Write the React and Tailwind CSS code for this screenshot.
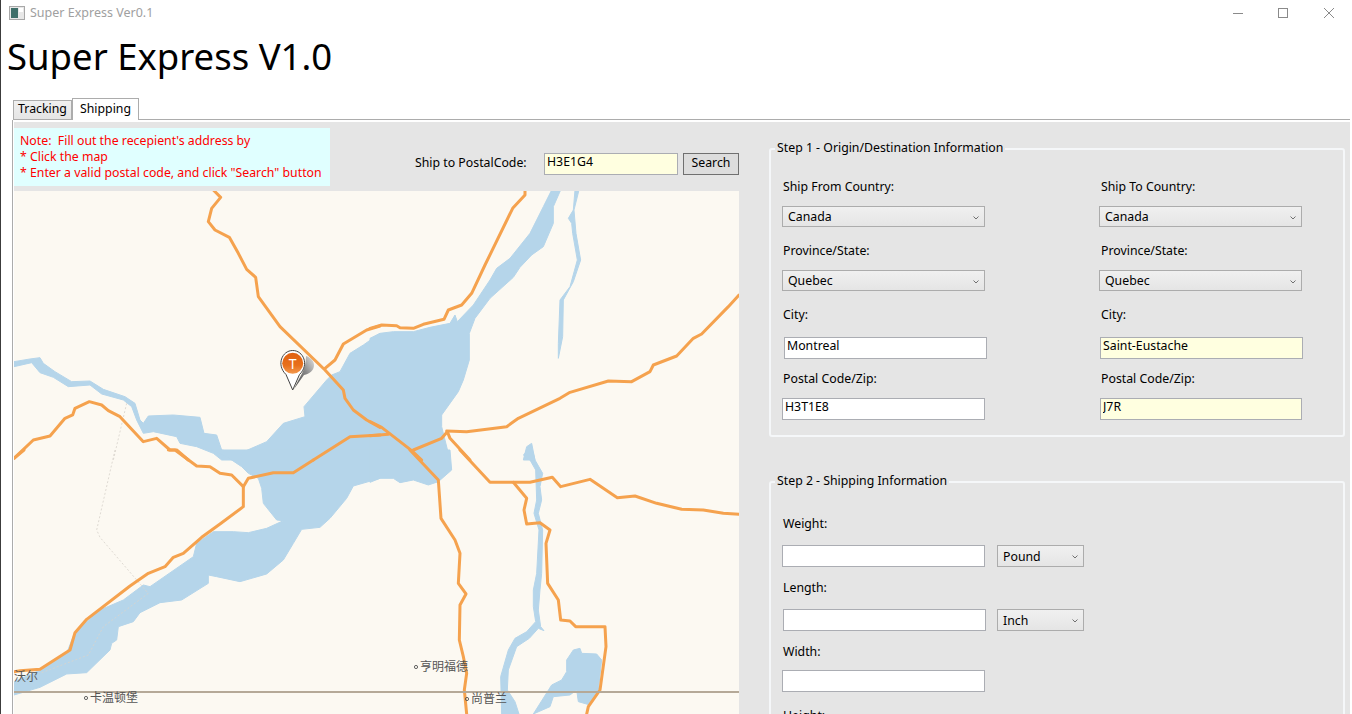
import React from 'react';

const FONT = "font-['Noto_Sans','Noto_Sans_CJK_SC',sans-serif]";

// map traced from the reference in 3x tiles, one group per tile
const TILES = {
  a: 'translate(0 190) scale(0.33333)',
  b: 'translate(370 190) scale(0.33333)',
  c: 'translate(0 450) scale(0.33333)',
  d: 'translate(370 450) scale(0.33333)',
};

const WATER = [
  ['a', '42,515 90,507 120,503 130,520 165,545 215,575 270,573 310,598 375,620 405,640 420,690 430,700 445,678 520,675 600,682 612,730 650,735 665,780 720,790 800,755 850,700 915,680 912,650 980,570 995,555 1020,545 1050,490 1090,465 1140,430 1140,810 665,810 640,790 590,770 540,760 530,740 460,725 430,730 410,690 395,650 370,630 305,612 270,585 205,590 160,562 120,548 95,518 42,530'],
  ['b', '0,445 30,430 70,425 130,425 180,412 240,400 255,375 262,395 310,345 360,270 380,235 420,205 480,130 520,50 545,0 572,0 550,50 550,100 520,170 485,195 450,232 430,262 360,325 315,385 298,430 298,510 280,570 265,605 215,675 215,710 240,810 0,810'],
  ['b', '615,0 627,0 612,60 618,130 632,210 610,275 580,330 578,440 565,505 565,460 570,330 600,290 622,210 608,130 605,100 595,85 610,60'],
  ['c', '635,0 735,0 780,0 1140,0 1140,85 1060,108 1040,145 990,205 960,232 905,238 880,280 850,330 800,372 720,395 650,380 625,375 625,400 545,450 480,458 420,488 400,515 355,530 350,570 335,580 330,600 260,668 200,672 120,712 42,735 42,695 110,665 200,610 225,545 300,480 370,450 430,405 450,410 580,320 590,280 640,245 700,245 745,248 800,235 850,212 830,210 790,160 785,115 775,85 745,70 725,50 680,20'],
  ['d', '0,0 240,0 245,60 205,95 175,105 130,90 90,98 70,85 30,85 0,97'],
  ['d', '460,15 475,0 490,10 495,30 518,70 510,110 515,150 505,190 518,240 515,370 510,420 505,480 512,530 522,542 505,535 478,565 440,590 415,660 412,720 435,755 447,792 395,792 392,680 415,600 435,565 470,545 497,515 490,470 490,420 500,370 507,240 492,190 500,150 497,60 480,30'],
  ['d', '610,600 630,595 635,610 680,612 695,630 685,720 660,765 625,755 620,720 600,735 550,740 540,770 490,792 545,705 575,690 590,665 590,630'],
  ['b', '460,810 470,770 485,760 495,810'],
];

const ROADS = [
  ['a', '640,0 662,22 635,55 625,95 645,120 688,142 715,190 740,238 767,262 775,320 840,410 975,540 1030,600 1035,625 1060,660 1100,690 1140,712'],
  ['a', '1140,408 1100,420 1030,462 1005,510 975,535'],
  ['a', '42,805 100,750 150,738 195,685 218,675 225,655 268,635 305,645 325,662 360,680 430,755 470,745 510,780 530,780 565,810'],
  ['a', '940,810 1050,740 1140,735'],
  ['b', '465,0 465,15 428,55 345,225 305,310 275,345 235,360 222,388 160,403 130,415 90,413 80,407 35,405 0,415'],
  ['b', '1107,315 1075,350 995,432 970,445 920,498 850,525 840,545 785,575 715,573 600,607 570,625 445,685 410,710 290,725 230,723'],
  ['b', '0,737 55,733'],
  ['b', '0,695 35,712 125,782 155,810'],
  ['b', '130,780 215,745 232,725 240,745 300,810'],
  ['c', '42,25 72,0'],
  ['c', '505,0 525,0 590,48 630,50 660,70 695,75 730,110 730,170 660,222 605,262 550,310 520,322 495,350 445,370 390,408 260,508 225,548 210,600 120,658 60,662 42,665'],
  ['c', '730,110 745,85 820,68 880,68 940,30'],
  ['d', '120,0 205,90 213,205 255,270 270,310 265,400 288,432 270,465 268,570 280,620 290,670 283,720 290,792'],
  ['d', '270,0 360,97 480,97 547,82 572,110 660,88 742,143 795,138 860,160 935,178 1000,180 1060,190 1107,193'],
  ['d', '430,97 470,145 462,180 470,222 510,218 540,240 528,280 533,400 565,450 572,510 600,513 617,530 705,530 708,590 690,720 655,770 650,792'],
];

const BORDERS = [
  ['a', '380,640 340,810'],
  ['c', '345,0 290,240 300,262 410,390 445,430 310,530 265,615 120,670'],
];

const PLACES = [
  { name: '卡温顿堡', x: 90, y: 702, dot: 86 },
  { name: '亨明福德', x: 420, y: 671, dot: 416 },
  { name: '尚普兰', x: 471, y: 703, dot: 467 },
];

function Chevron() {
  return (
    <svg width="6" height="4" viewBox="0 0 6 4" className="shrink-0">
      <path d="M0.5 0.5 L3 3 L5.5 0.5" fill="none" stroke="#707070" strokeWidth="1" />
    </svg>
  );
}

function Select({ value, className }) {
  return (
    <div className={`flex h-[21px] items-center justify-between border border-[#acacac] bg-gradient-to-b from-[#f0f0f0] to-[#e5e5e5] px-[5px] pt-[2px] text-[12.3px] leading-none text-black ${className}`}>
      <span>{value}</span>
      <Chevron />
    </div>
  );
}

function TextBox({ value = '', className }) {
  return (
    <input
      readOnly
      value={value}
      className={`block h-[22px] border border-[#abadb3] px-[2px] pb-[5px] text-[12.3px] leading-none text-black outline-none ${className}`}
    />
  );
}

function Label({ children }) {
  return <div className="h-[20px] pl-px text-[12.3px] leading-[20px] text-black">{children}</div>;
}

function Group({ title, className, children }) {
  return (
    <fieldset className={`rounded-[3px] border-2 border-[#f5f7f9] pl-[11px] ${className}`}>
      <legend className="-ml-[7px] px-[2px] pb-[2px] text-[12.3px] leading-[16px] text-black">{title}</legend>
      {children}
    </fieldset>
  );
}

function MapPin() {
  return (
    <g>
      <path d="M294 389 L304 375 C316 373 318 360 306 356 C306 370 300 376 294 389 Z" fill="url(#pinShadow)" />
      <path
        d="M292.7 390 L286 374.5 C276 365 282 350.5 292.7 350.5 C303.5 350.5 309.5 365 299.5 374.5 Z"
        fill="#fff"
        stroke="#444"
        strokeWidth="1"
      />
      <circle cx="292.7" cy="363.3" r="10.5" fill="url(#pinBall)" />
      <text x="292.7" y="368.5" textAnchor="middle" fontSize="14" fill="#fff">T</text>
    </g>
  );
}

function RoadMap() {
  return (
    <svg viewBox="14 191 725 523" width="725" height="523" className="block bg-[#fcf9f2]">
      <defs>
        <linearGradient id="pinBall" x1="0" y1="0" x2="0" y2="1">
          <stop offset="0" stopColor="#e0600f" />
          <stop offset="0.6" stopColor="#e8701c" />
          <stop offset="1" stopColor="#f2994f" />
        </linearGradient>
        <linearGradient id="pinShadow" x1="0" y1="1" x2="1" y2="0">
          <stop offset="0" stopColor="#444" />
          <stop offset="0.55" stopColor="#888" />
          <stop offset="1" stopColor="#e4e4e4" />
        </linearGradient>
      </defs>
      {WATER.map(([tile, points], i) => (
        <polygon key={i} transform={TILES[tile]} points={points} fill="#b5d5ea" stroke="#b5d5ea" strokeWidth="3" strokeLinejoin="round" />
      ))}
      {BORDERS.map(([tile, points], i) => (
        <polyline key={i} transform={TILES[tile]} points={points} fill="none" stroke="#d8d4cc" strokeWidth="2.5" strokeDasharray="6 6" />
      ))}
      {ROADS.map(([tile, points], i) => (
        <polyline key={i} transform={TILES[tile]} points={points} fill="none" stroke="#f5a24e" strokeWidth="9" strokeLinejoin="round" strokeLinecap="round" />
      ))}
      <line x1="14" y1="692" x2="739" y2="692" stroke="#b5a998" strokeWidth="2" />
      <text x="14" y="681" fontSize="12" fill="#555">沃尔</text>
      {PLACES.map((p) => (
        <g key={p.name}>
          <circle cx={p.dot} cy={p.y - 4} r="1.6" fill="none" stroke="#555" strokeWidth="0.9" />
          <text x={p.x} y={p.y} fontSize="12" fill="#555">{p.name}</text>
        </g>
      ))}
      <MapPin />
    </svg>
  );
}

export default function App() {
  return (
    <div className={`h-[714px] w-[1352px] overflow-hidden border-l border-[#3c3c3c] bg-white pr-[2px] ${FONT}`}>
      {/* title bar */}
      <div className="flex h-[26px] items-center pl-[8px]">
        <svg width="16" height="14" viewBox="0 0 16 14" className="shrink-0">
          <rect x="0.5" y="0.5" width="15" height="13" fill="#e8e8e8" stroke="#a8a8a8" />
          <rect x="2" y="2" width="7" height="10" fill="#3f6f6a" />
          <rect x="10" y="2" width="4" height="4" fill="#fff" />
        </svg>
        <span className="ml-[5px] text-[12.5px] text-[#a0a0a0]">Super Express Ver0.1</span>
        <div className="ml-auto flex items-center gap-[36px] pr-[16px]">
          <svg width="10" height="10" viewBox="0 0 10 10" className="-mr-px"><path d="M0 5.5 H10" stroke="#8a8a8a" /></svg>
          <svg width="10" height="10" viewBox="0 0 10 10"><rect x="0.5" y="0.5" width="9" height="9" fill="none" stroke="#8a8a8a" /></svg>
          <svg width="10" height="10" viewBox="0 0 10 10"><path d="M0 0 L10 10 M10 0 L0 10" stroke="#8a8a8a" /></svg>
        </div>
      </div>

      <h1 className="h-[72px] pl-[6px] text-[36.5px] leading-[60px] text-black">Super Express V1.0</h1>

      {/* tabs */}
      <div className="ml-[12px] flex h-[22px] items-end border-b border-[#acacac]">
        <div className="-mb-px flex h-[20px] w-[59px] items-center justify-center border border-[#acacac] bg-gradient-to-b from-[#f0f0f0] to-[#e5e5e5] pb-px text-[12.3px] leading-none text-black">Tracking</div>
        <div className="-mb-px flex h-[22px] w-[67px] items-center justify-center border border-b-0 border-[#acacac] bg-white text-[12.3px] leading-none text-black">Shipping</div>
      </div>

      <div className="ml-[11px] border-l border-[#acacac] pl-px pt-[2px]">
        <div className="flex h-[592px] bg-[#e5e5e5]">
          {/* left side: note, search, map */}
          <div className="w-[725px] shrink-0">
            <div className="flex h-[69px]">
              <div className="mt-[6px] h-[58px] w-[316px] bg-[#e0ffff] px-[6px] pt-[5px] text-[12.3px] leading-[16px] text-[#ff0000]">
                <div className="whitespace-pre">Note:  Fill out the recepient's address by</div>
                <div>* Click the map</div>
                <div>* Enter a valid postal code, and click "Search" button</div>
              </div>
              <div className="ml-[85px] mt-[31px] flex h-[22px] items-center">
                <span className="w-[129px] pb-[2px] text-[12.3px] text-black">Ship to PostalCode:</span>
                <TextBox value="H3E1G4" className="w-[134px] bg-[#ffffe0]" />
                <button className="ml-[5px] h-[22px] w-[56px] border border-[#707070] bg-[#dddddd] pb-[2px] text-[12.3px] leading-none text-black">Search</button>
              </div>
            </div>
            <RoadMap />
          </div>

          {/* right side: steps */}
          <div className="w-[576px] shrink-0 pl-[30px] pt-[18px]">
            <Group title="Step 1 - Origin/Destination Information" className="h-[297px] w-[576px]">
              <div className="grid grid-cols-[318px_200px] pt-[19px]">
                <div className="h-[64px]">
                  <Label>Ship From Country:</Label>
                  <Select value="Canada" className="mt-[9px] w-[203px]" />
                </div>
                <div className="h-[64px]">
                  <Label>Ship To Country:</Label>
                  <Select value="Canada" className="-ml-px mt-[9px] w-[203px]" />
                </div>
                <div className="h-[64px]">
                  <Label>Province/State:</Label>
                  <Select value="Quebec" className="mt-[9px] w-[203px]" />
                </div>
                <div className="h-[64px]">
                  <Label>Province/State:</Label>
                  <Select value="Quebec" className="-ml-px mt-[9px] w-[203px]" />
                </div>
                <div className="h-[64px]">
                  <Label>City:</Label>
                  <TextBox value="Montreal" className="ml-[2px] mt-[12px] w-[203px] bg-white" />
                </div>
                <div className="h-[64px]">
                  <Label>City:</Label>
                  <TextBox value="Saint-Eustache" className="mt-[12px] w-[203px] bg-[#ffffe0]" />
                </div>
                <div className="h-[64px]">
                  <Label>Postal Code/Zip:</Label>
                  <TextBox value="H3T1E8" className="mt-[9px] w-[203px] bg-white" />
                </div>
                <div className="h-[64px]">
                  <Label>Postal Code/Zip:</Label>
                  <TextBox value="J7R" className="mt-[9px] w-[202px] bg-[#ffffe0]" />
                </div>
              </div>
            </Group>

            <Group title="Step 2 - Shipping Information" className="mt-[36px] h-[300px] w-[576px]">
              <div className="pt-[23px]">
                <div className="h-[64px]">
                  <Label>Weight:</Label>
                  <div className="mt-[11px] flex gap-[12px]">
                    <TextBox className="w-[203px] bg-white" />
                    <Select value="Pound" className="h-[22px] w-[87px]" />
                  </div>
                </div>
                <div className="h-[64px]">
                  <Label>Length:</Label>
                  <div className="mt-[11px] flex gap-[11px]">
                    <TextBox className="ml-px w-[203px] bg-white" />
                    <Select value="Inch" className="h-[22px] w-[87px]" />
                  </div>
                </div>
                <div className="h-[64px]">
                  <Label>Width:</Label>
                  <TextBox className="mt-[8px] w-[203px] bg-white" />
                </div>
                <Label>Height:</Label>
              </div>
            </Group>
          </div>
        </div>
      </div>
    </div>
  );
}
